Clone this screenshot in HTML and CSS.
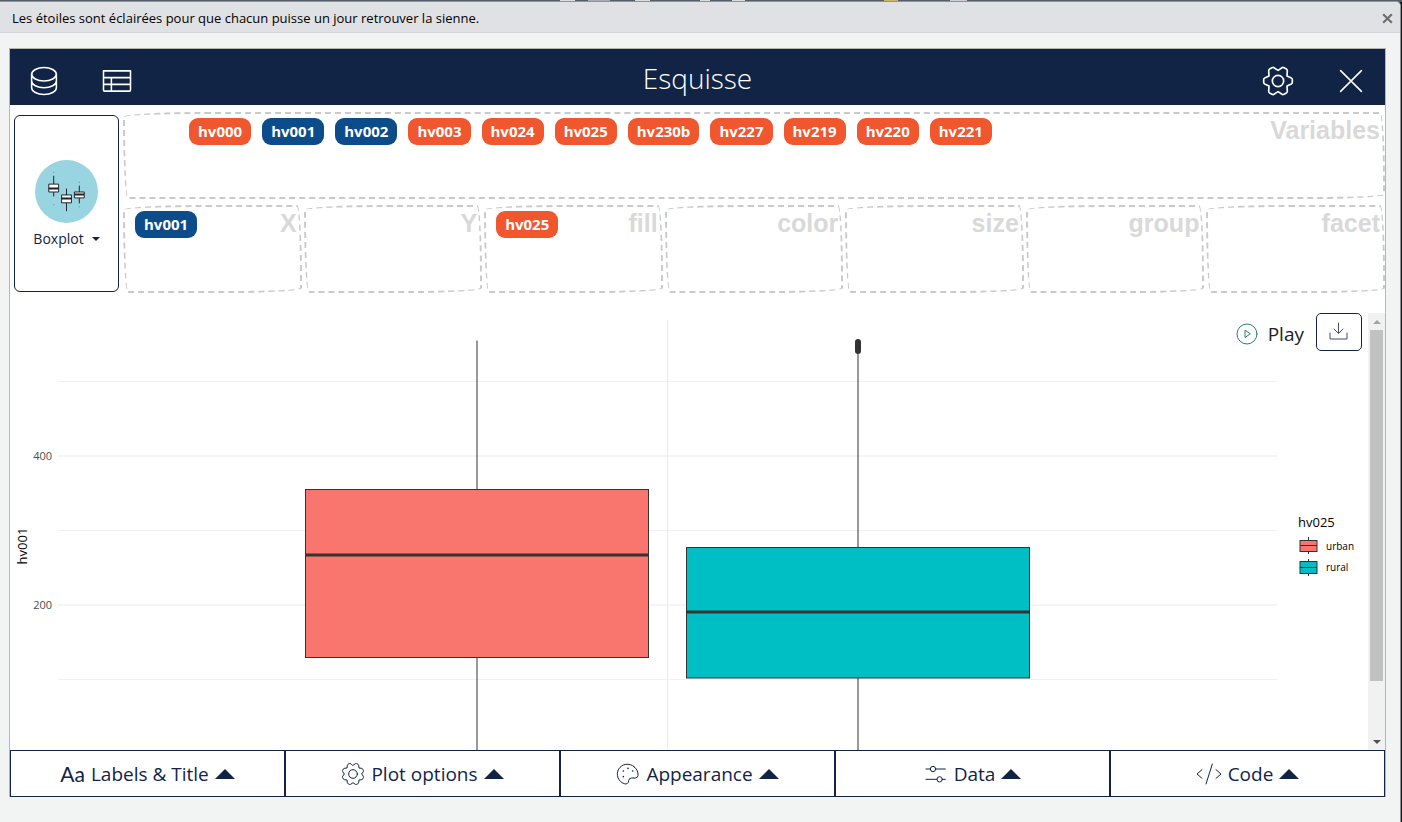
FILE: index.html
```html
<!DOCTYPE html>
<html lang="fr">
<head>
<meta charset="utf-8">
<title>Esquisse</title>
<link rel="stylesheet" href="styles.css">
</head>
<body>
<div class="backdrop">
<div class="window">
  <header class="titlebar">
    <span>Les étoiles sont éclairées pour que chacun puisse un jour retrouver la sienne.</span>
    <button class="window-close" aria-label="Fermer"><svg viewBox="0 0 12 12"><path d="M2 2l8 8M10 2l-8 8"/></svg></button>
  </header>
  <main class="app">
    <div class="navbar">
      <div class="nav-group">
        <button class="nav-btn" aria-label="Import data"><svg viewBox="0 0 256 256"><ellipse cx="128" cy="80" rx="88" ry="48"/><path d="M40 80v48c0 26.500 39.400 48 88 48s88-21.500 88-48V80M40 128v48c0 26.500 39.400 48 88 48s88-21.500 88-48v-48"/></svg></button>
        <button class="nav-btn" aria-label="Show data"><svg viewBox="0 0 256 256"><path d="M32 56h192v136a8 8 0 0 1-8 8H40a8 8 0 0 1-8-8zM32 104h192M32 152h192M88 104v96"/></svg></button>
      </div>
      <h1 class="brand">Esquisse</h1>
      <div class="nav-group">
        <button class="nav-btn" aria-label="Settings"><svg class="gear-six" viewBox="-54 -54 108 108"><circle r="17"/><path d="M0-32L-11-39Q-14-42-18-40L-24-37Q-28-35-28-31L-27-15L-40-9Q-43-8-43-4V4Q-43 8-40 9L-27 15L-28 31Q-28 35-24 37L-18 40Q-14 42-11 39L0 32L11 39Q14 42 18 40L24 37Q28 35 28 31L27 15L40 9Q43 8 43 4V-4Q43-8 40-9L27-15L28-31Q28-35 24-37L18-40Q14-42 11-39Z"/></svg></button>
        <button class="nav-btn" aria-label="Close"><svg viewBox="0 0 256 256"><path d="M54 54l148 148M202 54L54 202"/></svg></button>
      </div>
    </div>

    <section class="controls">
      <button class="geom">
        <svg class="geom-icon" viewBox="0 0 64 64"><circle cx="32" cy="32" r="32" fill="#99d5e1"/><g stroke="#1e2426" stroke-width="1" fill="#fff"><path d="M19 16v21M32 29v23M45 26v18"/><path d="M14 24.500h10v8H14zM27 35.500h10v8H27zM40 32.500h10v6H40z"/><path stroke-width="2" d="M14 29h10M27 39h10M40 35h10"/></g><g fill="#5f8d97"><path d="M18.500 12h1v1h-1zM18.500 45h1v1h-1zM44.500 22h1v1h-1zM44.500 47h1v1h-1z"/></g></svg>
        <span class="geom-label">Boxplot <i class="caret-down"></i></span>
      </button>
      <div class="drag">
        <div class="zone source">
          <div class="chips">
            <span class="chip">hv000</span><span class="chip num">hv001</span><span class="chip num">hv002</span><span class="chip">hv003</span><span class="chip">hv024</span><span class="chip">hv025</span><span class="chip">hv230b</span><span class="chip">hv227</span><span class="chip">hv219</span><span class="chip">hv220</span><span class="chip">hv221</span>
          </div>
          <span class="zone-name">Variables</span>
        </div>
        <div class="targets">
          <div class="zone"><span class="chip num">hv001</span><span class="zone-name">X</span></div>
          <div class="zone"><span class="zone-name">Y</span></div>
          <div class="zone"><span class="chip">hv025</span><span class="zone-name">fill</span></div>
          <div class="zone"><span class="zone-name">color</span></div>
          <div class="zone"><span class="zone-name">size</span></div>
          <div class="zone"><span class="zone-name">group</span></div>
          <div class="zone"><span class="zone-name">facet</span></div>
        </div>
      </div>
    </section>

    <section class="plot">
      <svg class="chart" viewBox="10 313 1358 437" preserveAspectRatio="xMidYMin slice" role="img" aria-label="Boxplot of hv001 by hv025">
        <g class="minor"><path d="M58 381.500H1277M58 530.500H1277M58 679.500H1277"/></g>
        <g class="major"><path d="M58 456H1277M58 605H1277M667.500 320V750"/></g>
        <g class="box">
          <path d="M477 340.500V750M858 354V547M858 678V750"/>
          <rect x="305.500" y="489.500" width="343" height="168" fill="#f8766d"/>
          <rect x="686.500" y="547.500" width="343" height="130.500" fill="#00bfc4"/>
          <path class="median" d="M305 555H649M686 612H1030"/>
          <path class="outliers" d="M858 342V351"/>
        </g>
        <g class="tick" text-anchor="end"><text x="52" y="460">400</text><text x="52" y="609">200</text></g>
        <text class="axis" transform="translate(27 546) rotate(-90)" text-anchor="middle">hv001</text>
        <text class="axis" x="1298" y="527">hv025</text>
        <g class="box">
          <path d="M1308.500 537V554M1308.500 559V576"/>
          <rect x="1300" y="540.500" width="17" height="11" fill="#f8766d"/>
          <rect x="1300" y="561.500" width="17" height="12" fill="#00bfc4"/>
          <path d="M1300 545.500h17M1300 567.500h17"/>
        </g>
        <g class="legend"><text x="1326" y="550">urban</text><text x="1326" y="571">rural</text></g>
      </svg>
      <div class="plot-tools">
        <button class="play"><svg viewBox="0 0 22 22"><circle cx="11" cy="11" r="10"/><path d="M9 7.500v7l5-3.500z"/></svg>Play</button>
        <button class="download" aria-label="Download"><svg viewBox="0 0 20 20"><path d="M1 11v6h17v-6M9.500 1v10M5 7l4.500 4.500L14 7"/></svg></button>
      </div>
      <div class="scrollbar" aria-hidden="true"><i class="up"></i><div class="track"><div class="thumb"></div></div><i class="down"></i></div>
    </section>

    <nav class="tabs">
      <button class="tab"><span class="aa">Aa</span>Labels &amp; Title<i class="caret-up"></i></button>
      <button class="tab"><svg viewBox="-36 -36 72 72"><circle r="13"/><path d="M0-26L7-31Q9-32 11-31L15-29Q17-28 17-26L18-18L26-17Q28-17 29-15L31-11Q32-9 31-7L26 0L31 7Q32 9 31 11L29 15Q28 17 26 17L18 18L17 26Q17 28 15 29L11 31Q9 32 7 31L0 26L-7 31Q-9 32-11 31L-15 29Q-17 28-17 26L-18 18L-26 17Q-28 17-29 15L-31 11Q-32 9-31 7L-26 0L-31-7Q-32-9-31-11L-29-15Q-28-17-26-17L-18-18L-17-26Q-17-28-15-29L-11-31Q-9-32-7-31Z"/></svg>Plot options<i class="caret-up"></i></button>
      <button class="tab"><svg viewBox="-36 -36 72 72"><path d="M18-22A30 30 0 1 0-11 29A9 9 0 0 0 2 20A9 9 0 0 1 11 12H22A9 9 0 0 0 30 5A30 30 0 0 0 18-22Z"/><path class="dots" d="M0-17v.1M-14-9v.1M-14 8v.1M14-9v.1"/></svg>Appearance<i class="caret-up"></i></button>
      <button class="tab"><svg viewBox="-36 -36 72 72"><path d="M-30-15h13M0-15h28M-30 16h33M20 16h8"/><circle cx="-9" cy="-15" r="8"/><circle cx="11" cy="16" r="8"/></svg>Data<i class="caret-up"></i></button>
      <button class="tab"><svg class="code" viewBox="-39 -36 78 72"><path d="M-21-13L-36 0L-21 13M10-30L-9 30M21-13L36 0L21 13"/></svg>Code<i class="caret-up"></i></button>
    </nav>
  </main>
</div>
</div>
</body>
</html>
```
FILE: styles.css
```css
* { box-sizing: border-box; }
body { margin: 0; font-family: "Open Sans", "Noto Sans", sans-serif; color: #112446; }
button { font: inherit; color: inherit; background: none; border: 0; padding: 0; margin: 0; cursor: pointer; }
svg { display: block; fill: none; stroke: currentColor; stroke-linecap: round; stroke-linejoin: round; }

.backdrop {
  min-height: 100vh;
  display: flex;
  padding: 1px 1px 0 0;
  background:
    linear-gradient(90deg, #535e69 560px, #dcdedd 560px 575px, #535e69 575px 588px, #aab 588px 610px, #535e69 610px 635px, #ddd 635px 650px, #535e69 650px 700px, #ddd 700px 710px, #535e69 710px 732px, #ddd 732px 745px, #535e69 745px 884px, #cdb36b 884px 898px, #535e69 898px 950px, #ccd 950px 967px, #535e69 967px) 0 0 / 100% 2px no-repeat,
    #16181c;
}
.window {
  flex: 1;
  display: flex;
  flex-direction: column;
  background: #f2f4f3;
  border-top: 1px solid #8f9397;
  border-right: 1px solid #8f9397;
  border-radius: 0 5px 0 0;
}
.titlebar {
  display: flex;
  justify-content: space-between;
  align-items: center;
  height: 31px;
  padding: 2px 6px 0 12px;
  background: #e0e1e5;
  border-bottom: 1px solid #d5d6da;
  border-radius: 0 5px 0 0;
  font-size: 13px;
  color: #000;
}
.window-close svg { width: 13px; height: 13px; stroke: #6e6e6e; stroke-width: 2; stroke-linecap: butt; }

.app {
  flex: 1;
  display: flex;
  flex-direction: column;
  margin: 15px 14px 25px 9px;
  background: #fff;
  border: 1px solid #b3b7b6;
  border-bottom: 0;
}
.navbar {
  display: grid;
  grid-template-columns: 1fr auto 1fr;
  align-items: center;
  height: 56px;
  padding: 7px 16px 0;
  background: #112446;
  color: #fff;
}
.nav-group { display: flex; gap: 37px; }
.nav-group:last-child { justify-content: flex-end; }
.nav-btn svg { width: 36px; height: 36px; stroke-width: 11; }
.nav-btn .gear-six { stroke-width: 5; }
.brand { margin: 0; padding-bottom: 6px; font-size: 28px; font-weight: 300; line-height: 36px; }

.controls { display: flex; gap: 4px; padding: 7px 0 0 4px; }
.geom {
  display: flex;
  flex-direction: column;
  align-items: center;
  justify-content: center;
  gap: 6px;
  flex: none;
  width: 105px;
  height: 177px;
  margin-top: 3px;
  padding-top: 2px;
  border: 1px solid #112446;
  border-radius: 6px;
}
.geom-icon { width: 63px; height: 63px; stroke: none; stroke-linecap: butt; }
.geom-label { display: flex; align-items: center; gap: 8px; font-size: 14px; line-height: 20px; }
.caret-down { border: 4px solid transparent; border-top-color: currentColor; border-bottom: 0; }

.drag { flex: 1; min-width: 0; display: flex; flex-direction: column; gap: 6px; }
.targets { display: grid; grid-template-columns: repeat(7, 1fr); gap: 2px; }
.zone {
  display: flex;
  align-items: flex-start;
  justify-content: space-between;
  height: 88px;
  padding: 4px 3px 0 10px;
  border: 2px dashed #cacaca;
  border-radius: 255px 15px 225px 15px / 15px 225px 15px 255px;
}
.source { height: 87px; padding-left: 64px; }
.zone-name {
  margin-left: auto;
  font-family: "Liberation Sans", Arial, sans-serif;
  font-size: 25px;
  font-weight: 700;
  line-height: 25px;
  color: #d9d9d9;
}
.chips { display: flex; flex-wrap: wrap; gap: 11px; }
.chip {
  padding: 0 9px;
  border-radius: 9px;
  background: #f0572e;
  color: #fff;
  font-size: 15px;
  font-weight: 700;
  line-height: 27px;
}
.chip.num { background: #0d4c8a; }

.plot { position: relative; flex: 1; display: flex; min-height: 0; margin-top: 20px; }
.chart { flex: 1; min-width: 0; height: 437px; stroke: none; stroke-linecap: butt; stroke-linejoin: miter; }
.minor { stroke: #f1f1f1; stroke-width: 1; }
.major { stroke: #ebebeb; stroke-width: 1; }
.box { stroke: #333; stroke-width: 1; }
.median { stroke-width: 3; }
.outliers { stroke-width: 6; stroke-linecap: round; }
.tick { font-size: 11px; fill: #4d4d4d; }
.axis { font-size: 13px; fill: #000; }
.legend { font-size: 10px; fill: #000; }
.plot-tools { position: absolute; top: 0; right: 23px; display: flex; gap: 12px; }
.play { display: flex; align-items: center; gap: 10px; padding-top: 4px; font-size: 19px; color: #222; }
.play svg { width: 22px; height: 22px; stroke: #2e7d64; }
.download { display: grid; place-items: center; width: 46px; height: 38px; border: 1px solid #112446; border-radius: 5px; }
.download svg { width: 20px; height: 20px; opacity: .8; }
.scrollbar { display: flex; flex-direction: column; align-items: center; width: 17px; background: #f1f1f1; }
.up, .down { margin: 7px 0 6px; border: 4px solid transparent; }
.up { border-bottom-color: #a3a3a3; border-top: 0; }
.down { border-top-color: #505050; border-bottom: 0; }
.track { flex: 1; width: 13px; }
.thumb { height: 87%; background: #c1c1c1; }

.tabs { display: grid; grid-template-columns: repeat(5, 1fr); }
.tab {
  display: flex;
  align-items: center;
  justify-content: center;
  gap: 6px;
  height: 47px;
  border: 1px solid #112446;
  font-size: 19px;
  white-space: nowrap;
}
.tab svg { width: 24px; height: 24px; stroke-width: 3; }
.tab .code { width: 26px; }
.tab .dots { stroke-width: 5; }
.aa { font-family: Lato, sans-serif; font-size: 21px; }
.caret-up { border: 10px solid transparent; border-bottom-color: currentColor; border-top: 0; }
```
